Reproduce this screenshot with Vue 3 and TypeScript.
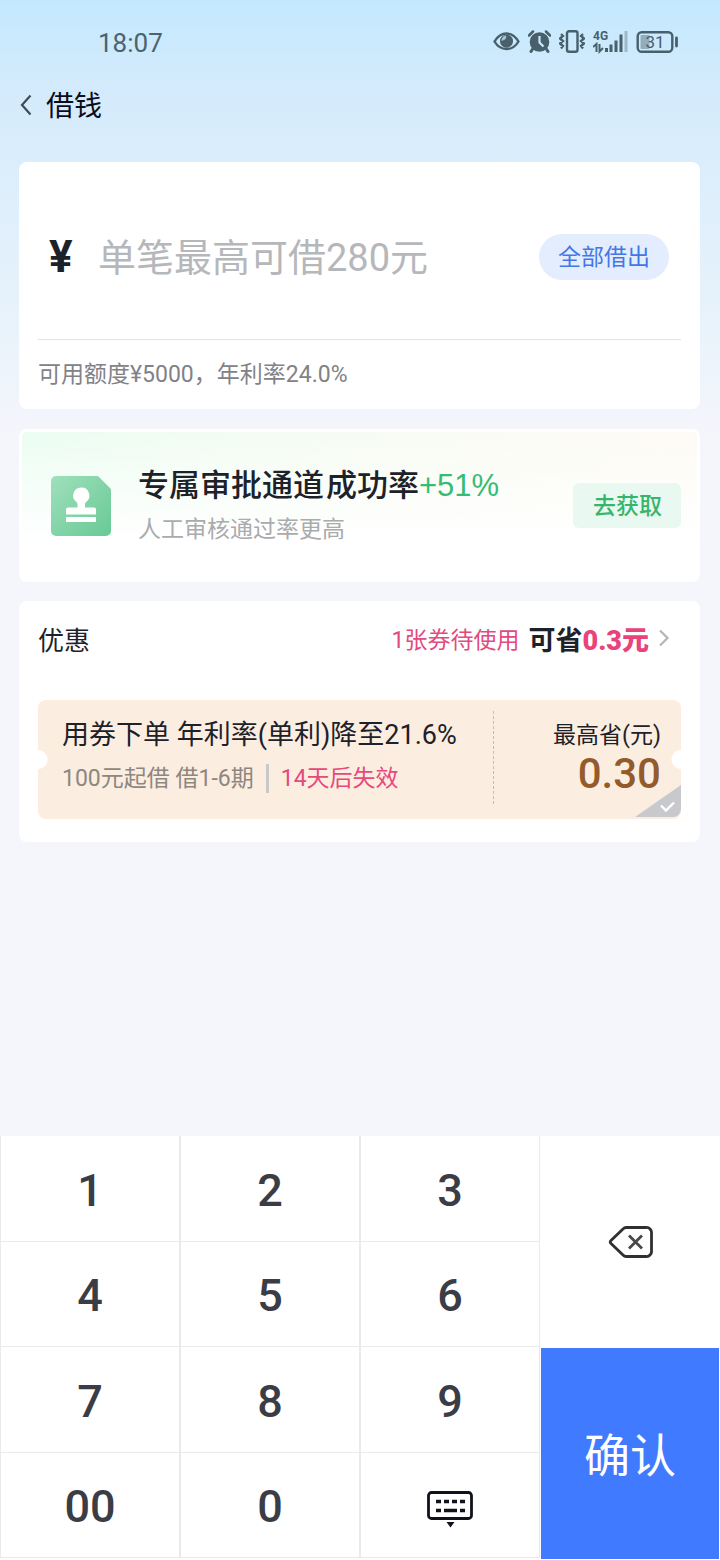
<script setup lang="ts">
import { ref } from 'vue'

const limit = 280
const amount = ref('')

const digits = ['1', '2', '3', '4', '5', '6', '7', '8', '9', '00', '0']

function press(value: string) {
  amount.value += value
}

function erase() {
  amount.value = amount.value.slice(0, -1)
}

function fillAll() {
  amount.value = String(limit)
}
</script>

<template>
  <div class="page">
    <div class="status">
      <span class="time">18:07</span>
      <div class="indicators">
        <svg width="27" height="24" viewBox="0 0 27 24" aria-hidden="true">
          <path d="M1.500 11.500C4.500 6.500 8.500 3.500 13.500 3.500S22.500 6.500 25.500 11.500C22.500 16.500 18.500 19 13.500 19S4.500 16.500 1.500 11.500Z" fill="none" stroke="#48606c" stroke-width="2.400" />
          <circle cx="13.500" cy="11.200" r="6.500" fill="#48606c" />
          <path d="M13 5.500Q14.500 9.500 8.500 11A5 5 0 0 1 13 5.500Z" fill="#a9c0cf" />
        </svg>
        <svg width="23" height="24" viewBox="0 0 23 24" aria-hidden="true">
          <circle cx="11.500" cy="12" r="9.800" fill="#48606c" />
          <path d="M1 5.500 5 1.500M22 5.500 18 1.500" stroke="#48606c" stroke-width="2.500" stroke-linecap="round" />
          <path d="M5 18.500 3 21.500M18 18.500 20 21.500" stroke="#48606c" stroke-width="3" stroke-linecap="round" />
          <path d="M11.500 6V12.500L15.500 16.500" fill="none" stroke="#cdeafc" stroke-width="2.200" />
        </svg>
        <svg width="26" height="24" viewBox="0 0 26 24" aria-hidden="true">
          <rect x="8" y="1.200" width="10.500" height="20.600" rx="2" fill="none" stroke="#48606c" stroke-width="2.400" />
          <path d="M2 4 4 6 1 8.500 4 11 1 13.500 4 16 2 18.500M24 4 22 6 25 8.500 22 11 25 13.500 22 16 24 18.500" fill="none" stroke="#48606c" stroke-width="2.300" />
        </svg>
        <svg width="35" height="24" viewBox="0 0 35 24" aria-hidden="true">
          <text x="0" y="10" class="network">4G</text>
          <path d="M0 17 3.500 14V22M6.500 14V21.500L10 18" fill="none" stroke="#48606c" stroke-width="2" />
          <path d="M13.500 18v4M18 14.500V22M23 10.500V22M28 4.500V22" stroke="#48606c" stroke-width="3" />
          <path d="M33 1V22" stroke="#9db9c9" stroke-width="3" />
        </svg>
        <svg width="42" height="24" viewBox="0 0 42 24" aria-hidden="true">
          <rect x="1.700" y="2.200" width="34.600" height="19.600" rx="4" fill="none" stroke="#48606c" stroke-width="2.400" />
          <rect x="4.500" y="5" width="9" height="14" rx="1" fill="#93adbb" />
          <path d="M40.500 8v8" stroke="#48606c" stroke-width="2.800" stroke-linecap="round" />
          <text x="19" y="18" class="charge">31</text>
        </svg>
      </div>
    </div>

    <header class="bar">
      <button class="back" type="button" aria-label="返回">
        <svg width="12" height="22" viewBox="0 0 12 22" aria-hidden="true">
          <path d="M10.500 1.500 2 11l8.500 9.500" fill="none" stroke="#3d4c5a" stroke-width="2.200" />
        </svg>
      </button>
      <h1>借钱</h1>
    </header>

    <main class="content">
      <section class="card loan">
        <div class="amount">
          <label class="yen" for="amount">¥</label>
          <input id="amount" v-model="amount" type="text" inputmode="none" :placeholder="`单笔最高可借${limit}元`" />
          <button class="all" type="button" @click="fillAll">全部借出</button>
        </div>
        <p class="quota">可用额度¥5000，年利率24.0%</p>
      </section>

      <section class="card channel">
        <svg class="stamp" width="60" height="60" viewBox="0 0 60 60" aria-hidden="true">
          <defs>
            <linearGradient id="stampFill" x1="0" y1="0" x2="1" y2="1">
              <stop offset="0" stop-color="#9fe0bb" />
              <stop offset="1" stop-color="#68c996" />
            </linearGradient>
          </defs>
          <path d="M5 0H46a3 3 0 0 1 2 1L59 12a3 3 0 0 1 1 2V55a5 5 0 0 1-5 5H5a5 5 0 0 1-5-5V5a5 5 0 0 1 5-5Z" fill="url(#stampFill)" />
          <path d="M30 11.500a8 8 0 0 1 5 14.500q-1 1-1 3v2.500H43a2 2 0 0 1 2 2V38.500H15V33.500a2 2 0 0 1 2-2H26.500V29q0-2-1-3a8 8 0 0 1 4.500-14.500ZM15 41H45v5H15Z" fill="#fff" />
        </svg>
        <div class="pitch">
          <h2><span>专属审批通道</span><span>成功率<em>+51%</em></span></h2>
          <p>人工审核通过率更高</p>
        </div>
        <button class="get" type="button">去获取</button>
      </section>

      <section class="card offers">
        <div class="offers-head">
          <h3>优惠</h3>
          <a class="saving" href="#">
            <span class="pending">1张券待使用</span>
            <strong>可省<b>0.3元</b></strong>
            <svg width="12" height="18" viewBox="0 0 12 18" aria-hidden="true">
              <path d="M2 1.500 9.500 9 2 16.500" fill="none" stroke="#b4b5b9" stroke-width="2.200" />
            </svg>
          </a>
        </div>
        <button class="coupon" type="button">
          <span class="terms">
            <span class="rate">用券下单 年利率(单利)降至21.6%</span>
            <span class="rules"><span>100元起借 借1-6期</span><i></i><span class="expiry">14天后失效</span></span>
          </span>
          <span class="worth">
            <span class="worth-label">最高省(元)</span>
            <span class="worth-value">0.30</span>
          </span>
          <svg class="tick" width="46" height="32" viewBox="0 0 46 32" aria-hidden="true">
            <path d="M0 32 46 0V24a8 8 0 0 1-8 8Z" fill="#c8c9cc" />
            <path d="M26 20.500 31 25.500 39 17.500" fill="none" stroke="#fff" stroke-width="2.400" />
          </svg>
        </button>
      </section>
    </main>

    <div class="keypad">
      <button v-for="d in digits" :key="d" class="key" type="button" @click="press(d)">{{ d }}</button>
      <button class="key hide" type="button" aria-label="收起键盘">
        <svg width="46" height="38" viewBox="0 0 46 38" aria-hidden="true">
          <rect x="1.500" y="1.500" width="43" height="26" rx="3" fill="none" stroke="#11131c" stroke-width="2.800" />
          <path d="M9 10.500h5M17 10.500h5M25 10.500h5M33 10.500h5M9 19.500h5M17 19.500h13M33 19.500h5" stroke="#11131c" stroke-width="3.600" />
          <path d="M19.500 31h8l-4 5.500Z" fill="#11131c" />
        </svg>
      </button>
      <button class="erase" type="button" aria-label="删除" @click="erase">
        <svg width="46" height="34" viewBox="0 0 46 34" aria-hidden="true">
          <path d="M18 2.500H38a5 5 0 0 1 5.500 5.500V26a5 5 0 0 1-5.500 5.500H18q-1.500 0-3-1.500L3 18.500q-1.500-1.500 0-3L15 4q1.500-1.500 3-1.500Z" fill="none" stroke="#303033" stroke-width="2.800" />
          <path d="M21 10.500 34 23.500M34 10.500 21 23.500" stroke="#48484b" stroke-width="2.800" />
        </svg>
      </button>
      <button class="confirm" type="button">确认</button>
    </div>
  </div>
</template>

<style>
body {
  margin: 0;
}
</style>

<style scoped>
.page {
  display: flex;
  flex-direction: column;
  min-height: 100vh;
  background: linear-gradient(#c4e9fe 0, #d2eafc 80px, #dceefb 170px, #e6f2fb 300px, #f5f6fb 440px);
  color: #1d2129;
  font-family: Roboto, "Noto Sans CJK SC", sans-serif;
}

button {
  padding: 0;
  border: 0;
  background: none;
  color: inherit;
  font: inherit;
  cursor: pointer;
}

h1,
h2,
h3,
p {
  margin: 0;
  font-weight: 400;
}

svg {
  display: block;
  flex: none;
}

.status {
  display: flex;
  align-items: center;
  justify-content: space-between;
  height: 84px;
  padding: 0 42px 0 98px;
}

.time {
  padding-top: 2px;
  color: #4c626e;
  font-size: 26px;
}

.indicators {
  display: flex;
  gap: 8px;
}

.network {
  fill: #48606c;
  font-size: 12px;
  font-weight: 700;
}

.charge {
  fill: #48606c;
  font-size: 17px;
  text-anchor: middle;
}

.bar {
  display: flex;
  align-items: center;
  gap: 14px;
  height: 42px;
  padding: 0 20px;
}

h1 {
  padding-top: 4px;
  color: #0b0d1c;
  font-size: 28px;
  line-height: 42px;
}

.content {
  display: flex;
  flex-direction: column;
  gap: 20px;
  padding: 36px 20px 20px 19px;
}

.card {
  border-radius: 8px;
  background: #fff;
}

.loan {
  padding: 0 19px;
}

.amount {
  display: flex;
  align-items: center;
  height: 164px;
  padding: 13px 12px 0 11px;
  border-bottom: 1px solid #e2e3e5;
}

.yen {
  width: 49px;
  font-size: 44px;
  font-weight: 700;
}

input {
  flex: 1;
  min-width: 0;
  padding: 2px 0 0;
  border: 0;
  outline: 0;
  background: none;
  color: #1d2129;
  font-family: inherit;
  font-size: 38px;
}

input::placeholder {
  color: #b6b7ba;
  opacity: 1;
}

.all {
  height: 46px;
  padding: 0 19px 4px;
  border-radius: 23px;
  background: #e3edfd;
  color: #4277e8;
  font-size: 23px;
}

.quota {
  color: #818287;
  font-size: 23px;
  line-height: 69px;
}

.channel {
  display: flex;
  align-items: center;
  box-sizing: border-box;
  height: 153px;
  padding: 0 16px 0 29px;
  border: 3px solid #fff;
  background:
    linear-gradient(rgba(255, 255, 255, 0), #fff 75%),
    linear-gradient(90deg, #ebfdf2, #f6fcf2 45%, #fefbf5);
}

.pitch {
  flex: 1;
  padding: 5px 0 0 27px;
}

h2 {
  display: flex;
  gap: 2px;
  font-family: "Liberation Sans", "Noto Sans CJK SC", sans-serif;
  font-size: 31px;
  font-weight: 500;
  line-height: 44px;
}

em {
  color: #36bd75;
  font-style: normal;
}

.pitch p {
  color: #aaabad;
  font-size: 23px;
  line-height: 44px;
}

.get {
  height: 45px;
  padding: 0 19px 3px 20px;
  border-radius: 6px;
  background: #e9f9f1;
  color: #36b56f;
  font-size: 23px;
  font-weight: 500;
}

.offers {
  margin-top: -1px;
  padding: 0 19px 23px;
}

.offers-head {
  display: flex;
  align-items: center;
  justify-content: space-between;
  height: 74px;
  margin-bottom: 25px;
}

h3 {
  font-size: 26px;
}

.saving {
  display: flex;
  align-items: center;
  padding-right: 11px;
  color: inherit;
  text-decoration: none;
}

.pending {
  margin-right: 9px;
  color: #e24a80;
  font-size: 23px;
}

strong {
  margin-right: 9px;
  font-size: 27px;
  font-weight: 700;
}

b {
  color: #ea427a;
}

.coupon {
  position: relative;
  display: flex;
  width: 100%;
  height: 119px;
  border-radius: 8px;
  background:
    radial-gradient(circle at 0 50%, #fff 9px, transparent 10px),
    radial-gradient(circle at 100% 50%, #fff 9px, transparent 10px),
    #fbede0;
  text-align: left;
  white-space: nowrap;
}

.terms {
  display: flex;
  flex: 1;
  flex-direction: column;
  padding: 14px 0 0 24px;
}

.rate {
  font-size: 27px;
  line-height: 43px;
}

.rules {
  display: flex;
  align-items: center;
  color: #8d8780;
  font-size: 23px;
  line-height: 43px;
}

.rules i {
  width: 3px;
  height: 29px;
  margin: 0 12px;
  background: #c9c9c9;
}

.expiry {
  color: #e8487c;
}

.worth {
  display: flex;
  flex-direction: column;
  align-items: flex-end;
  box-sizing: border-box;
  width: 188px;
  margin: 11px 0 15px;
  padding: 3px 20px 0 0;
  border-left: 1px dashed #d3b8a6;
}

.worth-label {
  font-size: 23px;
  line-height: 43px;
}

.worth-value {
  color: #935b2b;
  font-size: 42px;
  font-weight: 500;
  line-height: 34px;
}

.tick {
  position: absolute;
  right: 0;
  bottom: 2px;
}

.keypad {
  display: grid;
  grid-template-rows: repeat(4, 1fr);
  grid-template-columns: repeat(4, 1fr);
  height: 422px;
  margin-top: auto;
  padding-bottom: 2px;
  background: #fff;
}

.key {
  display: flex;
  align-items: center;
  justify-content: center;
  padding-top: 4px;
  border: 1px solid #e9eaeb;
  border-top: 0;
  color: #3a3c46;
  font-size: 45px;
  font-weight: 500;
}

.hide {
  padding-top: 10px;
}

.erase {
  display: flex;
  grid-area: 1 / 4 / 3 / 5;
  align-items: center;
  justify-content: center;
}

.erase svg {
  margin-left: 2px;
}

.confirm {
  grid-area: 3 / 4 / 5 / 5;
  margin: 1px 1px -1px;
  padding-bottom: 4px;
  background: #407bff;
  color: #fff;
  font-size: 46px;
}
</style>
